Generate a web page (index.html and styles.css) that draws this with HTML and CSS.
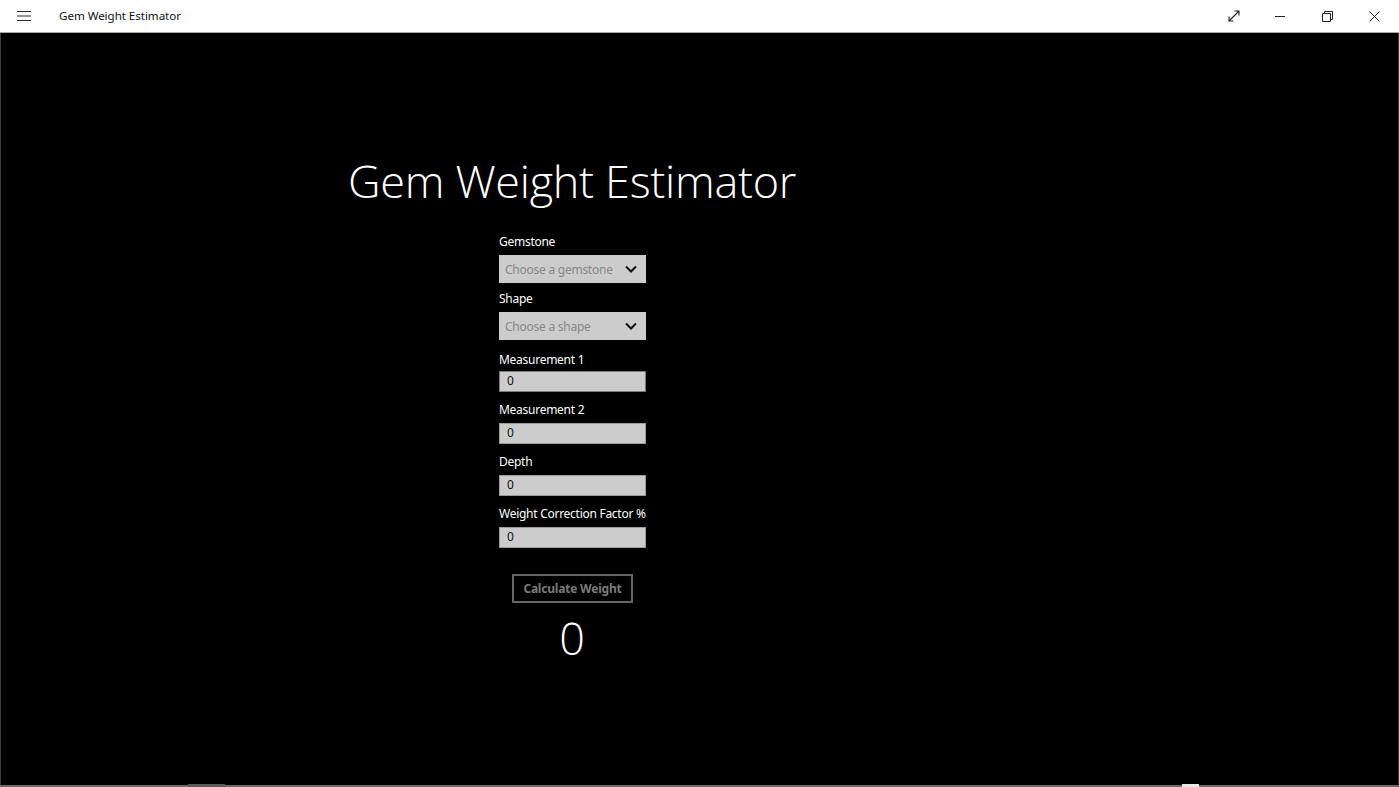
FILE: index.html
```html
<!DOCTYPE html>
<html>
<head>
<meta charset="utf-8">
<link rel="stylesheet" href="styles.css">
</head>
<body>
<div class="window">
  <header class="titlebar">
    <div class="tb-left">
      <span class="hamburger">
        <svg width="14" height="12" viewBox="0 0 14 12"><path d="M0 1.5h14M0 6h14M0 10.5h14" stroke="#333" stroke-width="1.2" fill="none"/></svg>
      </span>
      <span class="app-title">Gem Weight Estimator</span>
    </div>
    <div class="tb-controls">
      <span class="ctl">
        <svg width="12" height="12" viewBox="0 0 12 12"><path d="M1 11L11 1M6.5 1H11V5.5M1 6.5V11H5.5" stroke="#222" stroke-width="1.1" fill="none"/></svg>
      </span>
      <span class="ctl">
        <svg width="11" height="11" viewBox="0 0 11 11"><path d="M0 5.5h10" stroke="#222" stroke-width="1" fill="none"/></svg>
      </span>
      <span class="ctl">
        <svg width="11" height="11" viewBox="0 0 11 11"><path d="M0.5 2.5h8v8h-8z M2.5 2.5V0.5h8v8h-2" stroke="#222" stroke-width="1" fill="none"/></svg>
      </span>
      <span class="ctl">
        <svg width="11" height="11" viewBox="0 0 11 11"><path d="M0.5 0.5L10.5 10.5M10.5 0.5L0.5 10.5" stroke="#222" stroke-width="1" fill="none"/></svg>
      </span>
    </div>
  </header>
  <main class="content">
    <div class="column">
      <h1 class="heading">Gem Weight Estimator</h1>
      <div class="form">
        <label class="lbl lbl-first">Gemstone</label>
        <div class="combo"><span class="ph">Choose a gemstone</span>
          <svg class="chev" width="12" height="8" viewBox="0 0 12 8"><path d="M1 1.5L6 6.5L11 1.5" stroke="#111" stroke-width="2" fill="none"/></svg>
        </div>
        <label class="lbl lbl-combo">Shape</label>
        <div class="combo"><span class="ph">Choose a shape</span>
          <svg class="chev" width="12" height="8" viewBox="0 0 12 8"><path d="M1 1.5L6 6.5L11 1.5" stroke="#111" stroke-width="2" fill="none"/></svg>
        </div>
        <label class="lbl lbl-m1">Measurement 1</label>
        <div class="tbox tbox-focus">0</div>
        <label class="lbl">Measurement 2</label>
        <div class="tbox">0</div>
        <label class="lbl">Depth</label>
        <div class="tbox">0</div>
        <label class="lbl">Weight Correction Factor %</label>
        <div class="tbox">0</div>
      </div>
      <div class="btn">Calculate Weight</div>
      <div class="result">0</div>
    </div>
  </main>
  <div class="bottom">
    <span class="mark mark-grey"></span>
    <span class="mark mark-white"></span>
  </div>
</div>
</body>
</html>
```

FILE: styles.css
```css
* { box-sizing: border-box; }
html, body { margin: 0; padding: 0; }
body {
  width: 1399px;
  height: 787px;
  overflow: hidden;
  background: #000;
  font-family: "Noto Sans", "Open Sans", sans-serif;
}
.window {
  display: flex;
  flex-direction: column;
  height: 787px;
}
.titlebar {
  height: 33px;
  background: #fff;
  border-bottom: 1px solid #a8a8a8;
  display: flex;
  justify-content: space-between;
  align-items: center;
  flex: none;
}
.tb-left {
  display: flex;
  align-items: center;
}
.hamburger {
  width: 47px;
  display: flex;
  justify-content: center;
  padding-bottom: 1px;
}
.app-title {
  margin-left: 12px;
  font-family: "Noto Sans", sans-serif;
  font-size: 11.6px;
  letter-spacing: -0.05px;
  color: #111;
  padding-bottom: 2px;
}
.tb-controls {
  display: flex;
  height: 32px;
  margin-right: 1px;
}
.ctl {
  width: 47px;
  display: flex;
  align-items: center;
  justify-content: center;
}
.content {
  flex: 1;
  border-left: 1px solid #3a3a3a;
  border-right: 1px solid #3a3a3a;
  display: flex;
}
.column {
  width: 1142px;
  display: flex;
  flex-direction: column;
  align-items: center;
}
.heading {
  margin: 116px 0 0 0;
  font-family: "Open Sans", sans-serif;
  font-weight: 300;
  font-size: 45px;
  line-height: 64px;
  color: #fff;
  letter-spacing: -0.3px;
}
.form {
  width: 147px;
  display: flex;
  flex-direction: column;
  margin-left: 1px;
  margin-top: 10px;
}
.lbl {
  color: #fff;
  font-size: 12px;
  letter-spacing: -0.27px;
  line-height: 17px;
  margin-top: 9px;
  margin-bottom: 5px;
  white-space: nowrap;
}
.lbl-first { margin-top: 10px; }
.lbl-combo { margin-top: 7px; }
.lbl-m1 { margin-top: 11px; margin-bottom: 3px; }
.combo {
  height: 28px;
  background: #cccccc;
  display: flex;
  align-items: center;
  justify-content: space-between;
  padding: 0 9px 0 6px;
}
.ph {
  color: #888;
  font-size: 12px;
  letter-spacing: -0.25px;
}
.chev { display: block; }
.tbox {
  height: 21px;
  background: #cccccc;
  border: 1px solid #9a9a9a;
  color: #111;
  font-size: 12px;
  line-height: 18px;
  padding-left: 7px;
}
.tbox-focus { border-color: #7a7a7a; }
.btn {
  margin-top: 26px;
  width: 121px;
  height: 29px;
  border: 2px solid #666;
  color: #7a7a7a;
  font-weight: 700;
  font-size: 12px;
  letter-spacing: -0.2px;
  display: flex;
  align-items: center;
  justify-content: center;
  margin-left: 1px;
}
.result {
  color: #fff;
  font-family: "Open Sans", sans-serif;
  font-weight: 300;
  font-size: 45px;
  line-height: 64px;
  margin-top: 3px;
}
.bottom {
  height: 2px;
  background: #6a6a6a;
  position: relative;
  flex: none;
}
.mark {
  position: absolute;
  bottom: 0;
  height: 3px;
}
.mark-grey { left: 188px; width: 37px; background: #5a5a5a; }
.mark-white { left: 1182px; width: 17px; background: #e8e8e8; }
```
